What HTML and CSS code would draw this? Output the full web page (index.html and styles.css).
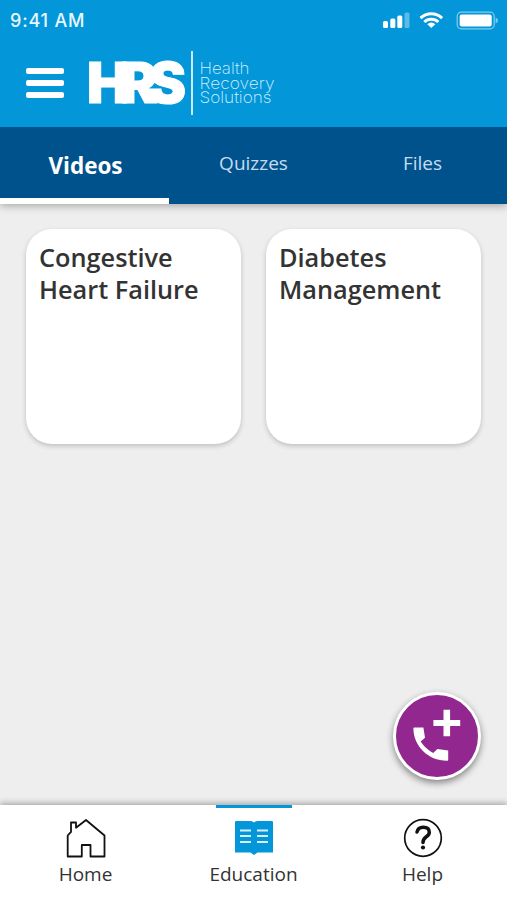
FILE: index.html
```
<!DOCTYPE html>
<html lang="en">
<head>
    <meta charset="UTF-8">
    <meta name="viewport" content="width=device-width, initial-scale=1.0">
    <title>HRS Education</title>
    <link rel="stylesheet" href="styles.css">
</head>
<body>
    <div class="app">
        <header class="header">
            <div class="status-bar">
                <span class="time">9:41 AM</span>
                <svg class="status-icons" width="116" height="20" viewBox="0 0 116 20" fill="#fff">
                    <rect x="0" y="11" width="5" height="7" rx="1.5"/>
                    <rect x="7.3" y="8.5" width="5" height="9.5" rx="1.5"/>
                    <rect x="14.3" y="5.5" width="5" height="12.5" rx="1.5"/>
                    <rect x="21.5" y="2.5" width="5" height="15.5" rx="1.5" opacity=".35"/>
                    <g fill="none" stroke="#fff" stroke-width="3">
                        <path d="M37.5 8.2 A15.5 15.5 0 0 1 59.1 8.2"/>
                        <path d="M41.3 12 A10 10 0 0 1 55.3 12"/>
                    </g>
                    <path d="M48.3 18 L44.3 14.2 A5.8 5.8 0 0 1 52.3 14.2 Z"/>
                    <rect x="74.2" y="2.2" width="37" height="16.6" rx="4" fill="none" stroke="#fff" stroke-width="1.2" opacity=".5"/>
                    <rect x="76.7" y="4.6" width="32" height="11.8" rx="2"/>
                    <path d="M112.6 7.5 Q115 8.5 115 10.5 T112.6 13.5 Z" opacity=".5"/>
                </svg>
            </div>
            <div class="brand-bar">
                <button class="menu-button" title="Menu">
                    <span></span>
                    <span></span>
                    <span></span>
                </button>
                <svg class="logo" width="190" height="66" viewBox="0 0 190 66">
                    <text class="logo-mark" x="-1" y="52.5" textLength="99" lengthAdjust="spacing">HRS</text>
                    <rect x="103" y="1" width="2" height="64" fill="#c9ebfb"/>
                    <text class="logo-name" x="111.5" y="23.5" textLength="50" lengthAdjust="spacingAndGlyphs">Health</text>
                    <text class="logo-name" x="111.5" y="38.5" textLength="75" lengthAdjust="spacingAndGlyphs">Recovery</text>
                    <text class="logo-name" x="111.5" y="53" textLength="72" lengthAdjust="spacingAndGlyphs">Solutions</text>
                </svg>
            </div>
            <nav class="tabs">
                <a class="tab active">Videos</a>
                <a class="tab">Quizzes</a>
                <a class="tab">Files</a>
            </nav>
        </header>

        <main class="cards">
            <div class="card">Congestive Heart Failure</div>
            <div class="card">Diabetes Management</div>
        </main>

        <button class="call-button" title="Call">
            <svg width="82" height="82" viewBox="0 0 82 82" fill="#fff">
                <path d="M47.5 14.8h6.6v10.1h10.1v6.2H54.1v10.1h-6.6V31.1H37.4v-6.2h10.1z"/>
                <path d="M18.2 32.5h9.2l1.6 10.3-4.3 3.8q4.5 7.2 12.5 11.4l4.2-4 10.8 1.4v9.6q0 .8-.8.8C32 66 17.4 51 17.4 33.300q0-.8.8-.8z"/>
            </svg>
        </button>

        <nav class="bottom-nav">
            <a class="nav-item">
                <svg width="42" height="42" viewBox="0 0 42 42" fill="none" stroke="#111" stroke-width="1.8" stroke-linejoin="round">
                    <path d="M2.7 39.5V18.5l3.3-3.6V5.500h5v5.2L21 3l18.500 15.500v21H25.500V28h-8.700v11.500z"/>
                </svg>
                <span>Home</span>
            </a>
            <a class="nav-item active">
                <svg width="42" height="42" viewBox="0 0 42 42">
                    <path d="M2 5q0-1 1-1h14.5q2.5 0 3.5 1.5 1-1.5 3.5-1.5H39q1 0 1 1v30.5H24.500L21 38l-3.500-2.500H2z" fill="#0397da"/>
                    <path d="M7 13.500h11M7 19h11M7 25h11M24 13.500h11M24 19h11M24 25h11" stroke="#d9f0fa" stroke-width="2.2"/>
                </svg>
                <span>Education</span>
            </a>
            <a class="nav-item">
                <svg width="42" height="42" viewBox="0 0 42 42" fill="none" stroke="#111">
                    <circle cx="21" cy="21" r="18.3" stroke-width="1.7"/>
                    <path d="M15 15q1-4.800 6.300-4.800 6 0 6 5 0 2.600-3 4.600-3.300 2.200-3.300 5.700" stroke-width="3.5" stroke-linecap="round"/>
                    <circle cx="21" cy="30.5" r="2.1" fill="#111" stroke="none"/>
                </svg>
                <span>Help</span>
            </a>
        </nav>
    </div>
</body>
</html>
```
FILE: styles.css
```
:root {
    --primary: #0397da;
    --primary-dark: #00528d;
    --bg-color: #eeeeee;
    --text-color: #333333;
    --call-color: #92278f;
}

* {
    box-sizing: border-box;
}

body {
    margin: 0;
    font-family: "Open Sans", sans-serif;
    background: var(--bg-color);
    color: var(--text-color);
}

button {
    border: none;
    padding: 0;
    cursor: pointer;
}

.app {
    height: 900px;
    display: flex;
    flex-direction: column;
    position: relative;
    overflow: hidden;
}

.header {
    background: var(--primary);
    box-shadow: 0 2px 8px rgba(0, 0, 0, 0.3);
}

.status-bar {
    height: 40px;
    padding: 0 8px 0 10px;
    display: flex;
    justify-content: space-between;
    align-items: center;
}

.time {
    font-family: Inter, sans-serif;
    font-size: 18px;
    font-weight: 500;
    letter-spacing: 0.8px;
    color: #e8f7ff;
}

.brand-bar {
    height: 87px;
    padding: 10px 26px 0;
    display: flex;
    align-items: flex-start;
    gap: 24px;
}

.menu-button {
    width: 38px;
    height: 66px;
    background: none;
    display: flex;
    flex-direction: column;
    justify-content: center;
    gap: 6px;
}

.menu-button span {
    height: 6px;
    border-radius: 2px;
    background: #fff;
}

.logo {
    overflow: visible;
}

.logo-mark {
    font-family: Inter, sans-serif;
    font-size: 56px;
    font-weight: 900;
    fill: #fff;
    stroke: #fff;
    stroke-width: 1px;
}

.logo-name {
    font-family: Inter, sans-serif;
    font-size: 16px;
    font-weight: 200;
    fill: #d5f0fc;
}

.tabs {
    height: 77px;
    display: grid;
    grid-template-columns: repeat(3, 1fr);
    background: var(--primary-dark);
}

.tab {
    padding-top: 23px;
    text-align: center;
    font-size: 19px;
    line-height: 26px;
    color: #c5dcf0;
}

.tab.active {
    padding-top: 26px;
    padding-left: 2px;
    font-size: 22.5px;
    font-weight: 700;
    color: #fff;
    border-bottom: 6px solid #fff;
}

.cards {
    flex: 1;
    padding: 25px 26px;
    display: grid;
    grid-template-columns: 215px 215px;
    grid-auto-rows: 215px;
    gap: 25px;
}

.card {
    padding: 12px 13px;
    border-radius: 26px;
    background: #fff;
    box-shadow: 0 2px 5px rgba(0, 0, 0, 0.2);
    font-size: 25.3px;
    font-weight: 600;
    line-height: 32px;
}

/* floats over the content, above the bottom nav */
.call-button {
    position: absolute;
    right: 26px;
    bottom: 120px;
    width: 88px;
    height: 88px;
    border: 3px solid #fff;
    border-radius: 50%;
    background: var(--call-color);
    box-shadow: 0 3px 7px rgba(0, 0, 0, 0.45);
}

.call-button svg {
    display: block;
}

.bottom-nav {
    height: 95px;
    display: grid;
    grid-template-columns: repeat(3, 1fr);
    background: #fff;
    box-shadow: 0 -2px 6px rgba(0, 0, 0, 0.3);
}

.nav-item {
    display: flex;
    flex-direction: column;
    align-items: center;
    padding-top: 12px;
    padding-left: 2px;
    font-size: 19px;
    line-height: 30px;
}

.nav-item:last-child {
    padding-left: 0;
}

.nav-item.active {
    width: 76px;
    justify-self: center;
    padding-top: 9px;
    padding-left: 0;
    border-top: 3px solid var(--primary);
}
```
